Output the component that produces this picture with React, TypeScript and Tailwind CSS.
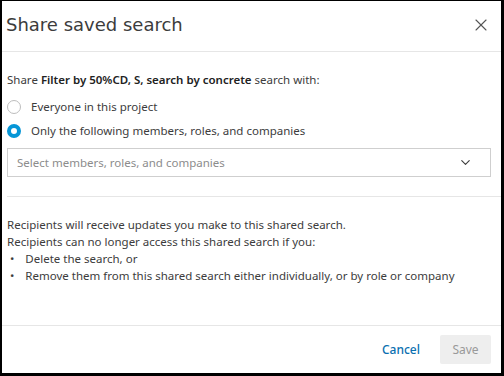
import { X, ChevronDown } from "lucide-react"

const bodyFont = "font-['Noto_Sans',sans-serif]"

export default function App() {
  return (
    <div className="w-[504px] h-[376px] bg-black pt-px pl-[2px]">
      <div className={`w-[499px] h-[372px] bg-white flex flex-col text-[#3c3c3c] ${bodyFont}`}>
        {/* header */}
        <div className="h-[51px] flex items-center justify-between pl-[4px] pr-[10px] border-b border-[#e6e6e6] shrink-0">
          <h1 className="text-[18px] font-['DejaVu_Sans',sans-serif] text-[#3c3c3c] pb-[4px]">Share saved search</h1>
          <X className="w-[20px] h-[20px] text-[#555] mb-[2px]" strokeWidth={1.3} />
        </div>

        {/* body */}
        <div className="flex-1 pl-[5px] pr-[10px] pt-[19px] text-[11.5px] leading-[17px]">
          <p>
            Share <span className="font-semibold text-[#222]">Filter by 50%CD, S, search by concrete</span> search with:
          </p>
          <div className="mt-[10px] flex flex-col gap-[7px]">
            <label className="flex items-center gap-[10px]">
              <span className="w-[14px] h-[14px] rounded-full border border-[#bdbdbd] bg-white" />
              <span>Everyone in this project</span>
            </label>
            <label className="flex items-center gap-[10px]">
              <span className="w-[14px] h-[14px] rounded-full border-[4px] border-[#0696d7] bg-white" />
              <span>Only the following members, roles, and companies</span>
            </label>
          </div>
          <div className="mt-[9px] h-[29px] border border-[#cfcfcf] flex items-center justify-between pl-[9px] pr-[17px]">
            <span className="text-[#8c8c8c]">Select members, roles, and companies</span>
            <ChevronDown className="w-[15px] h-[15px] text-[#3c3c3c]" strokeWidth={1.8} />
          </div>
          <div className="mt-[19px] -mr-[10px] border-t border-[#e6e6e6]" />
          <div className="mt-[19px]">
            <p>Recipients will receive updates you make to this shared search.</p>
            <p>Recipients can no longer access this shared search if you:</p>
            <ul>
              <li className="flex gap-[11px] pl-[3px]">
                <span>•</span>
                <span>Delete the search, or</span>
              </li>
              <li className="flex gap-[11px] pl-[3px]">
                <span>•</span>
                <span>Remove them from this shared search either individually, or by role or company</span>
              </li>
            </ul>
          </div>
        </div>

        {/* footer */}
        <div className="h-[48px] border-t border-[#e6e6e6] flex items-center justify-end gap-[20px] pr-[10px] shrink-0">
          <button className="text-[12px] text-[#0a6fb0] font-medium">Cancel</button>
          <button className="w-[51px] h-[29px] rounded-[2px] bg-[#eeeeee] text-[12px] text-[#999]">Save</button>
        </div>
      </div>
    </div>
  )
}
